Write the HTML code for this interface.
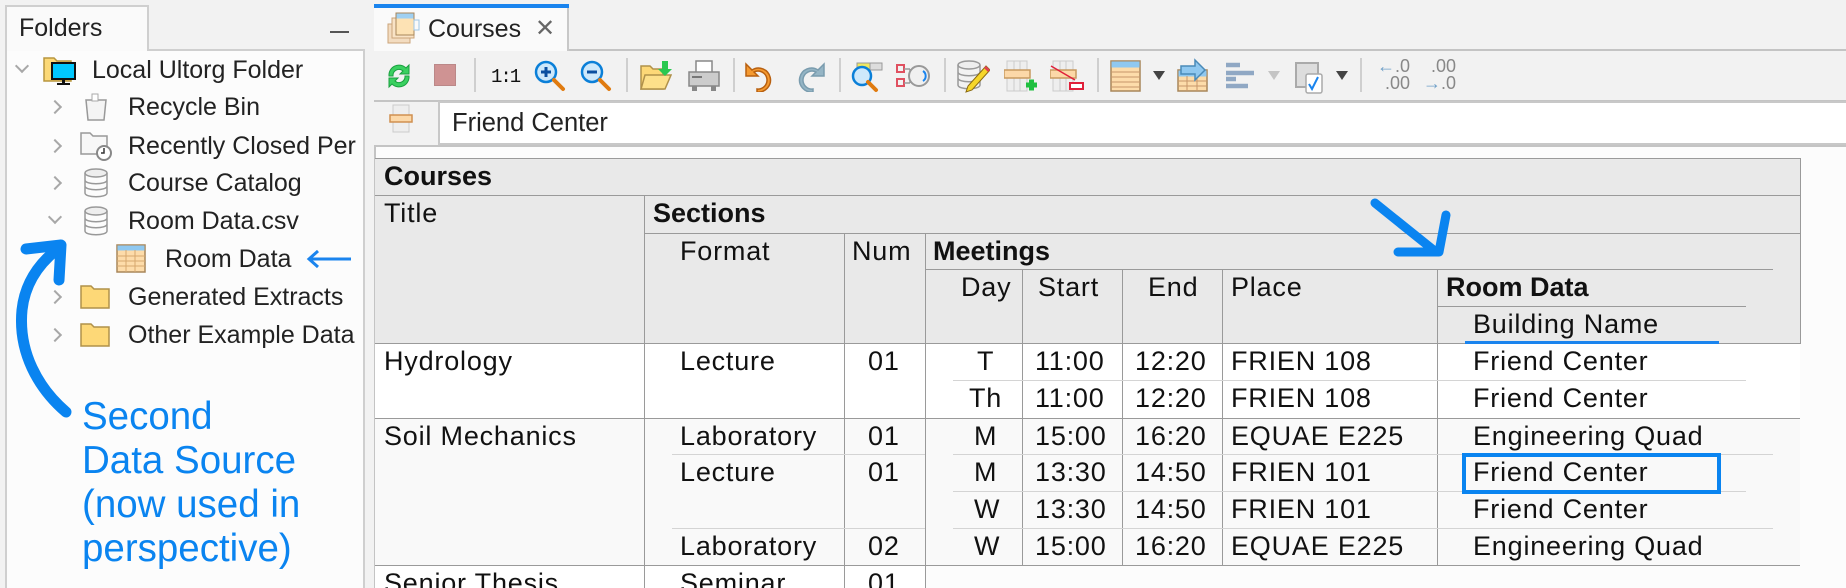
<!DOCTYPE html>
<html style="width:1846px;height:588px;overflow:hidden"><head><meta charset="utf-8">
<style>
*{margin:0;padding:0;box-sizing:border-box}
body{width:1846px;height:588px;overflow:hidden;background:#f2f2f2;font-family:"Liberation Sans",sans-serif;position:relative}
.a{position:absolute}
.t{position:absolute;font-size:25px;color:#222;white-space:nowrap;line-height:30px}
.g{position:absolute;font-size:27px;letter-spacing:0.8px;color:#111;white-space:nowrap;line-height:37px;font-family:"Liberation Sans",sans-serif}
.b{font-weight:bold}
.hl{position:absolute;height:1px;background:#9a9a9a}
.vl{position:absolute;width:1px;background:#9a9a9a}
.ll{position:absolute;height:1px;background:#d4d4d4}
.sep{position:absolute;top:58px;width:2px;height:34px;background:#cfcfcf}
.chev{position:absolute;width:10px;height:10px;border-right:2px solid #a8a8a8;border-bottom:2px solid #a8a8a8}
</style></head><body>

<!-- Left panel -->
<div class="a" style="left:5px;top:5px;width:144px;height:46px;background:#fafafa;border:2px solid #cfcfcf;border-bottom:none"></div>
<div class="t" style="left:19px;top:13px">Folders</div>
<div class="a" style="left:330px;top:31px;width:19px;height:2px;background:#555"></div>
<div class="a" style="left:5px;top:49px;width:360px;height:560px;background:#fcfcfc;border:2px solid #cfcfcf"></div>
<div class="a" style="left:7px;top:49px;width:140px;height:2px;background:#fafafa"></div>

<!-- tree -->
<div class="chev" style="left:17px;top:61px;transform:rotate(45deg)"></div>
<svg class="a" style="left:43px;top:54px" width="34" height="32" viewBox="0 0 34 32">
<path d="M1 4h10l3 3h14v20H1z" fill="#fcd977" stroke="#b8963e" stroke-width="1.5"/>
<rect x="9" y="9" width="23" height="16" fill="#00c8ff" stroke="#111" stroke-width="2"/>
<rect x="19" y="25" width="3" height="4" fill="#111"/><rect x="14" y="29" width="13" height="2" fill="#111"/></svg>
<div class="t" style="left:92px;top:55px">Local Ultorg Folder</div>

<div class="chev" style="left:50px;top:102px;transform:rotate(-45deg)"></div>
<svg class="a" style="left:83px;top:92px" width="26" height="30" viewBox="0 0 26 30">
<path d="M3 8h20l-2 20H5z" fill="#f4f4f4" stroke="#999" stroke-width="1.5"/>
<path d="M9 2h6v7H9z" fill="#fff" stroke="#aaa"/></svg>
<div class="t" style="left:128px;top:92px">Recycle Bin</div>

<div class="chev" style="left:50px;top:141px;transform:rotate(-45deg)"></div>
<svg class="a" style="left:80px;top:131px" width="32" height="30" viewBox="0 0 32 30">
<path d="M1 2h9l3 3h14v18H1z" fill="#f7f7f7" stroke="#999" stroke-width="1.5"/>
<circle cx="24" cy="22" r="7" fill="#fff" stroke="#888" stroke-width="2"/><path d="M24 17v5h-3" stroke="#333" stroke-width="1.5" fill="none"/></svg>
<div class="t" style="left:128px;top:131px;width:236px;overflow:hidden">Recently Closed Per</div>

<div class="chev" style="left:50px;top:178px;transform:rotate(-45deg)"></div>
<svg class="a" style="left:83px;top:168px" width="26" height="30" viewBox="0 0 26 30">
<ellipse cx="13" cy="5" rx="11" ry="4" fill="#eee" stroke="#999" stroke-width="1.5"/>
<path d="M2 5v20c0 5 22 5 22 0V5M2 12c0 5 22 5 22 0M2 18c0 5 22 5 22 0" fill="none" stroke="#999" stroke-width="1.5"/></svg>
<div class="t" style="left:128px;top:168px">Course Catalog</div>

<div class="chev" style="left:50px;top:212px;transform:rotate(45deg)"></div>
<svg class="a" style="left:83px;top:206px" width="26" height="30" viewBox="0 0 26 30">
<ellipse cx="13" cy="5" rx="11" ry="4" fill="#eee" stroke="#999" stroke-width="1.5"/>
<path d="M2 5v20c0 5 22 5 22 0V5M2 12c0 5 22 5 22 0M2 18c0 5 22 5 22 0" fill="none" stroke="#999" stroke-width="1.5"/></svg>
<div class="t" style="left:128px;top:206px">Room Data.csv</div>

<svg class="a" style="left:116px;top:244px" width="30" height="29" viewBox="0 0 30 29">
<rect x="1" y="1" width="28" height="27" fill="#fddcaa" stroke="#a8865a" stroke-width="1.5"/>
<rect x="1.5" y="1.5" width="27" height="5" fill="#8fc8f0"/>
<path d="M1 12h28M1 17h28M1 22h28M10 6v22M19 6v22" stroke="#d7a86e" stroke-width="1"/></svg>
<div class="t" style="left:165px;top:244px">Room Data</div>
<svg class="a" style="left:305px;top:249px" width="48" height="20" viewBox="0 0 48 20">
<path d="M46 10H4M13 2L4 10l9 8" stroke="#1a84ee" stroke-width="3" fill="none"/></svg>

<div class="chev" style="left:50px;top:292px;transform:rotate(-45deg)"></div>
<svg class="a" style="left:80px;top:284px" width="30" height="26" viewBox="0 0 30 26">
<path d="M1 2h10l3 3h15v19H1z" fill="#fdd877" stroke="#b0914a" stroke-width="1.5"/></svg>
<div class="t" style="left:128px;top:282px">Generated Extracts</div>

<div class="chev" style="left:50px;top:330px;transform:rotate(-45deg)"></div>
<svg class="a" style="left:80px;top:322px" width="30" height="26" viewBox="0 0 30 26">
<path d="M1 2h10l3 3h15v19H1z" fill="#fdd877" stroke="#b0914a" stroke-width="1.5"/></svg>
<div class="t" style="left:128px;top:320px;width:236px;overflow:hidden">Other Example Data</div>

<!-- curved annotation arrow -->
<svg class="a" style="left:0;top:230px" width="90" height="200" viewBox="0 230 90 200">
<path d="M66 412C38 388 18 352 22 310C25 282 40 262 60 247" stroke="#0a84f0" stroke-width="11" fill="none" stroke-linecap="round"/>
<path d="M26 249L61 245L59 280" stroke="#0a84f0" stroke-width="11" fill="none" stroke-linecap="round" stroke-linejoin="round"/></svg>
<div class="a" style="left:82px;top:395px;font-size:38.5px;line-height:44px;color:#0a84f0;white-space:nowrap">Second<br>Data Source<br>(now used in<br>perspective)</div>

<!-- Right panel -->
<div class="a" style="left:374px;top:49px;width:1472px;height:2px;background:#c4c4c4"></div>
<div class="a" style="left:374px;top:4px;width:195px;height:47px;background:#fafafa;border-right:2px solid #c8c8c8"></div>
<div class="a" style="left:374px;top:4px;width:195px;height:4px;background:#1a84ee"></div>
<svg class="a" style="left:386px;top:12px" width="34" height="32" viewBox="0 0 34 32">
<rect x="2" y="12" width="22" height="19" fill="#f3dcc0" stroke="#cba47a"/>
<rect x="6" y="6" width="22" height="20" fill="#f9e3c6" stroke="#cba47a"/>
<rect x="10" y="1" width="18" height="22" fill="#fde2b4" stroke="#a8865a"/>
<rect x="10.5" y="1.5" width="17" height="5" fill="#9fd0f2"/>
<rect x="28" y="8" width="5" height="10" fill="none" stroke="#9fc6e6"/></svg>
<div class="t" style="left:428px;top:14px">Courses</div>
<div class="a" style="left:535px;top:14px;font-size:24px;color:#666;line-height:30px">✕</div>

<!-- toolbar -->
<svg class="a" style="left:384px;top:60px" width="30" height="32" viewBox="0 0 30 32">
<path d="M5 16A10 10 0 0 1 22 8l3-3v9h-9l3-3A6 6 0 0 0 9 16z" fill="#3ad060" stroke="#1aa040"/>
<path d="M25 16A10 10 0 0 1 8 24l-3 3v-9h9l-3 3A6 6 0 0 0 21 16z" fill="#3ad060" stroke="#1aa040"/></svg>
<div class="a" style="left:434px;top:64px;width:22px;height:22px;background:#cf9393;border:1px solid #b88"></div>
<div class="sep" style="left:474px"></div>
<div class="a" style="left:491px;top:62px;font-size:19px;font-family:'Liberation Mono',monospace;line-height:30px;color:#111;letter-spacing:-2px">1:1</div>
<svg class="a" style="left:534px;top:60px" width="32" height="32" viewBox="0 0 32 32">
<circle cx="12" cy="12" r="10" fill="#cde8fb" stroke="#0a7fd8" stroke-width="2.5"/>
<path d="M20 20l9 9" stroke="#e07b10" stroke-width="4" stroke-linecap="round"/>
<path d="M7 12h10M12 7v10" stroke="#0a4fa0" stroke-width="3"/></svg>
<svg class="a" style="left:580px;top:60px" width="32" height="32" viewBox="0 0 32 32">
<circle cx="12" cy="12" r="10" fill="#cde8fb" stroke="#0a7fd8" stroke-width="2.5"/>
<path d="M20 20l9 9" stroke="#e07b10" stroke-width="4" stroke-linecap="round"/>
<path d="M7 12h10" stroke="#0a4fa0" stroke-width="3"/></svg>
<div class="sep" style="left:626px"></div>
<svg class="a" style="left:640px;top:60px" width="32" height="32" viewBox="0 0 32 32">
<path d="M1 6h9l3 3h10v20H1z" fill="#fdd877" stroke="#b0914a" stroke-width="1.5"/>
<path d="M5 15h26l-6 14H1z" fill="#fde08a" stroke="#b0914a" stroke-width="1.5"/>
<path d="M22 1v8h-4l7 7 7-7h-4V1z" fill="#2ac850"/></svg>
<svg class="a" style="left:688px;top:60px" width="32" height="32" viewBox="0 0 32 32">
<rect x="8" y="1" width="16" height="12" fill="#fff" stroke="#888" stroke-width="1.5"/>
<rect x="1" y="12" width="30" height="14" fill="#ccc" stroke="#888" stroke-width="1.5"/>
<rect x="4" y="26" width="5" height="5" fill="#888"/><rect x="23" y="26" width="5" height="5" fill="#888"/>
<rect x="4" y="16" width="10" height="2" fill="#777"/></svg>
<div class="sep" style="left:733px"></div>
<svg class="a" style="left:744px;top:60px" width="34" height="32" viewBox="0 0 34 32">
<path d="M2 4v12h12l-4-4a9 9 0 1 1 3 17v3a12 12 0 1 0-5-22z" fill="#f59a30" stroke="#b86010" stroke-width="1.5"/></svg>
<svg class="a" style="left:792px;top:60px" width="34" height="32" viewBox="0 0 34 32">
<path d="M32 4v12H20l4-4a9 9 0 1 0-3 17v3a12 12 0 1 1 5-22z" fill="#95b5c5" stroke="#7a9cae" stroke-width="1.5"/></svg>
<div class="sep" style="left:839px"></div>
<svg class="a" style="left:850px;top:60px" width="34" height="34" viewBox="0 0 34 34">
<rect x="7" y="3" width="25" height="7" fill="#f0e860" stroke="#999"/>
<rect x="20" y="3" width="12" height="7" fill="#ddd" stroke="#999"/>
<circle cx="12" cy="16" r="9" fill="#cde8fb" stroke="#0a7fd8" stroke-width="2.5"/>
<path d="M18 22l8 8" stroke="#e07b10" stroke-width="4" stroke-linecap="round"/></svg>
<svg class="a" style="left:896px;top:62px" width="34" height="28" viewBox="0 0 34 28">
<rect x="1" y="3" width="7" height="7" fill="none" stroke="#e05060" stroke-width="2"/>
<rect x="1" y="17" width="7" height="7" fill="none" stroke="#e05060" stroke-width="2"/>
<path d="M8 7h6M8 21h6M14 7v14" stroke="#999" stroke-width="1.5"/>
<circle cx="23" cy="14" r="10" fill="#f0f0f0" stroke="#999" stroke-width="2"/>
<path d="M27 9a6 6 0 0 1 0 10" stroke="#1a84ee" stroke-width="2" fill="none"/></svg>
<div class="sep" style="left:944px"></div>
<svg class="a" style="left:956px;top:60px" width="34" height="34" viewBox="0 0 34 34">
<ellipse cx="13" cy="5" rx="11" ry="4" fill="#eee" stroke="#999" stroke-width="1.5"/>
<path d="M2 5v20c0 5 22 5 22 0V5M2 12c0 5 22 5 22 0M2 18c0 5 22 5 22 0" fill="none" stroke="#999" stroke-width="1.5"/>
<path d="M30 6l4 4-18 20-6 2 2-6z" fill="#f6d62a" stroke="#8a6a10"/><path d="M30 6l4 4-2 2-4-4z" fill="#e04050"/></svg>
<svg class="a" style="left:1004px;top:60px" width="34" height="34" viewBox="0 0 34 34">
<rect x="3" y="1" width="20" height="30" fill="#eee" stroke="#ccc"/>
<path d="M10 1v30M16 1v30" stroke="#ccc"/>
<rect x="0" y="10" width="26" height="8" fill="#fcd8a8" stroke="#c89a60" stroke-width="1.5"/>
<path d="M22 25h11M27.5 19.5v11" stroke="#20c040" stroke-width="5"/></svg>
<svg class="a" style="left:1050px;top:60px" width="34" height="34" viewBox="0 0 34 34">
<rect x="3" y="1" width="20" height="30" fill="#eee" stroke="#ccc"/>
<path d="M10 1v30M16 1v30" stroke="#ccc"/>
<rect x="0" y="10" width="26" height="8" fill="#fcd8a8" stroke="#c89a60" stroke-width="1.5"/>
<path d="M1 6l24 14" stroke="#e0203a" stroke-width="1.5"/>
<rect x="20" y="23" width="13" height="6" fill="#fff" stroke="#e0203a" stroke-width="2"/></svg>
<div class="sep" style="left:1097px"></div>
<svg class="a" style="left:1110px;top:60px" width="32" height="32" viewBox="0 0 32 32">
<rect x="1" y="1" width="29" height="30" fill="#fddcaa" stroke="#a8865a" stroke-width="1.5"/>
<rect x="1.5" y="1.5" width="28" height="6" fill="#8fc8f0"/>
<path d="M1 12h29M1 17h29M1 22h29M1 27h29" stroke="#c8966a"/></svg>
<div class="a" style="left:1153px;top:71px;width:0;height:0;border-left:6px solid transparent;border-right:6px solid transparent;border-top:9px solid #444"></div>
<svg class="a" style="left:1177px;top:58px" width="32" height="34" viewBox="0 0 32 34">
<rect x="1" y="12" width="29" height="21" fill="#fddcaa" stroke="#a8865a" stroke-width="1.5"/>
<rect x="1.5" y="12.5" width="28" height="6" fill="#8fc8f0"/>
<path d="M1 23h29M1 28h29M10 18v15M20 18v15" stroke="#c8966a"/>
<path d="M4 8h14V2l10 10-10 10v-6H4z" fill="#8fc8f0" stroke="#4a8ab8" stroke-width="1.5"/></svg>
<svg class="a" style="left:1226px;top:62px" width="30" height="28" viewBox="0 0 30 28">
<path d="M0 3h14M0 11h28M0 17h10M0 24h22" stroke="#90a8c4" stroke-width="4.5"/></svg>
<div class="a" style="left:1268px;top:71px;width:0;height:0;border-left:6px solid transparent;border-right:6px solid transparent;border-top:9px solid #c4c4c4"></div>
<svg class="a" style="left:1295px;top:62px" width="32" height="32" viewBox="0 0 32 32">
<rect x="1" y="1" width="22" height="24" fill="#ddd" stroke="#aaa" stroke-width="2"/>
<rect x="11" y="12" width="16" height="19" rx="2" fill="#fff" stroke="#aaa" stroke-width="1.5"/>
<path d="M14 22l3 5 6-12" stroke="#1a84ee" stroke-width="2" fill="none"/></svg>
<div class="a" style="left:1336px;top:71px;width:0;height:0;border-left:6px solid transparent;border-right:6px solid transparent;border-top:9px solid #444"></div>
<div class="sep" style="left:1360px"></div>
<div class="a" style="left:1372px;top:58px;font-size:18px;color:#888;line-height:17px;text-align:right;width:38px"><span style="color:#70a0c8">←</span>.0<br>.00</div>
<div class="a" style="left:1418px;top:58px;font-size:18px;color:#888;line-height:17px;text-align:right;width:38px">.00<br><span style="color:#70a0c8">→</span>.0</div>

<!-- filter row -->
<div class="a" style="left:374px;top:100px;width:1472px;height:2px;background:#c4c4c4"></div>
<svg class="a" style="left:389px;top:104px" width="26" height="30" viewBox="0 0 26 30">
<rect x="4" y="1" width="16" height="27" fill="#eee" stroke="#ccc"/>
<rect x="1" y="11" width="22" height="7" fill="#fcd8a8" stroke="#d09050" stroke-width="1.5"/></svg>
<div class="a" style="left:438px;top:101px;width:1408px;height:44px;background:#fff;border:2px solid #c8c8c8;border-right:none"></div>
<div class="t" style="left:452px;top:108px;font-size:25.5px">Friend Center</div>
<div class="a" style="left:374px;top:145px;width:1472px;height:2px;background:#c4c4c4"></div>

<!-- grid area -->
<div class="a" style="left:374px;top:147px;width:1472px;height:441px;background:#fcfcfc;border-left:2px solid #c4c4c4"></div>
<div class="a" style="left:375px;top:158px;width:1425px;height:185px;background:#e9e9e9"></div>
<div class="a" style="left:375px;top:343px;width:1425px;height:75px;background:#fff"></div>
<div class="a" style="left:375px;top:418px;width:1425px;height:147px;background:#f9f9f9"></div>
<div class="a" style="left:375px;top:565px;width:550px;height:23px;background:#fff"></div>

<!-- header lines -->
<div class="hl" style="left:375px;top:158px;width:1425px"></div>
<div class="hl" style="left:375px;top:195px;width:1425px"></div>
<div class="hl" style="left:644px;top:233px;width:1156px"></div>
<div class="hl" style="left:925px;top:269px;width:848px"></div>
<div class="hl" style="left:1437px;top:306px;width:309px"></div>
<div class="hl" style="left:375px;top:343px;width:1425px"></div>
<div class="hl" style="left:375px;top:418px;width:1425px"></div>
<div class="hl" style="left:375px;top:565px;width:1425px"></div>
<div class="vl" style="left:1800px;top:158px;height:186px"></div>
<div class="vl" style="left:644px;top:195px;height:393px"></div>
<div class="vl" style="left:844px;top:233px;height:355px"></div>
<div class="vl" style="left:925px;top:233px;height:355px"></div>
<div class="vl" style="left:1022px;top:269px;height:296px"></div>
<div class="vl" style="left:1122px;top:269px;height:296px"></div>
<div class="vl" style="left:1222px;top:269px;height:296px"></div>
<div class="vl" style="left:1437px;top:269px;height:296px"></div>

<!-- inner lines -->
<div class="ll" style="left:953px;top:380px;width:793px"></div>
<div class="ll" style="left:672px;top:454px;width:253px"></div>
<div class="ll" style="left:953px;top:454px;width:820px"></div>
<div class="ll" style="left:953px;top:491px;width:793px"></div>
<div class="ll" style="left:672px;top:528px;width:253px"></div>
<div class="ll" style="left:953px;top:528px;width:820px"></div>

<!-- header text -->
<div class="g b" style="left:384px;top:158px;letter-spacing:0">Courses</div>
<div class="g" style="left:384px;top:195px">Title</div>
<div class="g b" style="left:653px;top:195px;letter-spacing:0">Sections</div>
<div class="g" style="left:680px;top:233px">Format</div>
<div class="g" style="left:852px;top:233px">Num</div>
<div class="g b" style="left:933px;top:233px;letter-spacing:0">Meetings</div>
<div class="g" style="left:961px;top:269px">Day</div>
<div class="g" style="left:1038px;top:269px">Start</div>
<div class="g" style="left:1148px;top:269px">End</div>
<div class="g" style="left:1231px;top:269px">Place</div>
<div class="g b" style="left:1446px;top:269px;letter-spacing:0">Room Data</div>
<div class="g" style="left:1473px;top:306px">Building Name</div>
<div class="a" style="left:1465px;top:341px;width:254px;height:3px;background:#1a84ee"></div>

<!-- diagonal arrow -->
<svg class="a" style="left:1360px;top:190px" width="100" height="75" viewBox="1360 190 100 75">
<path d="M1375 203L1436 252" stroke="#0a84f0" stroke-width="9" stroke-linecap="round"/>
<path d="M1398 252L1439 252L1446 215" stroke="#0a84f0" stroke-width="9" fill="none" stroke-linecap="round" stroke-linejoin="round"/></svg>

<!-- data -->
<div class="g" style="left:384px;top:343px">Hydrology</div>
<div class="g" style="left:680px;top:343px">Lecture</div>
<div class="g" style="left:868px;top:343px">01</div>
<div class="g" style="left:977px;top:343px">T</div>
<div class="g" style="left:1035px;top:343px">11:00</div>
<div class="g" style="left:1135px;top:343px">12:20</div>
<div class="g" style="left:1231px;top:343px">FRIEN 108</div>
<div class="g" style="left:1473px;top:343px">Friend Center</div>
<div class="g" style="left:969px;top:380px">Th</div>
<div class="g" style="left:1035px;top:380px">11:00</div>
<div class="g" style="left:1135px;top:380px">12:20</div>
<div class="g" style="left:1231px;top:380px">FRIEN 108</div>
<div class="g" style="left:1473px;top:380px">Friend Center</div>

<div class="g" style="left:384px;top:418px">Soil Mechanics</div>
<div class="g" style="left:680px;top:418px">Laboratory</div>
<div class="g" style="left:868px;top:418px">01</div>
<div class="g" style="left:974px;top:418px">M</div>
<div class="g" style="left:1035px;top:418px">15:00</div>
<div class="g" style="left:1135px;top:418px">16:20</div>
<div class="g" style="left:1231px;top:418px">EQUAE E225</div>
<div class="g" style="left:1473px;top:418px">Engineering Quad</div>

<div class="g" style="left:680px;top:454px">Lecture</div>
<div class="g" style="left:868px;top:454px">01</div>
<div class="g" style="left:974px;top:454px">M</div>
<div class="g" style="left:1035px;top:454px">13:30</div>
<div class="g" style="left:1135px;top:454px">14:50</div>
<div class="g" style="left:1231px;top:454px">FRIEN 101</div>
<div class="g" style="left:1473px;top:454px">Friend Center</div>
<div class="a" style="left:1462px;top:453px;width:259px;height:41px;border:4px solid #0a84f0"></div>

<div class="g" style="left:974px;top:491px">W</div>
<div class="g" style="left:1035px;top:491px">13:30</div>
<div class="g" style="left:1135px;top:491px">14:50</div>
<div class="g" style="left:1231px;top:491px">FRIEN 101</div>
<div class="g" style="left:1473px;top:491px">Friend Center</div>

<div class="g" style="left:680px;top:528px">Laboratory</div>
<div class="g" style="left:868px;top:528px">02</div>
<div class="g" style="left:974px;top:528px">W</div>
<div class="g" style="left:1035px;top:528px">15:00</div>
<div class="g" style="left:1135px;top:528px">16:20</div>
<div class="g" style="left:1231px;top:528px">EQUAE E225</div>
<div class="g" style="left:1473px;top:528px">Engineering Quad</div>

<div class="g" style="left:384px;top:565px">Senior Thesis</div>
<div class="g" style="left:680px;top:565px">Seminar</div>
<div class="g" style="left:868px;top:565px">01</div>

</body></html>
